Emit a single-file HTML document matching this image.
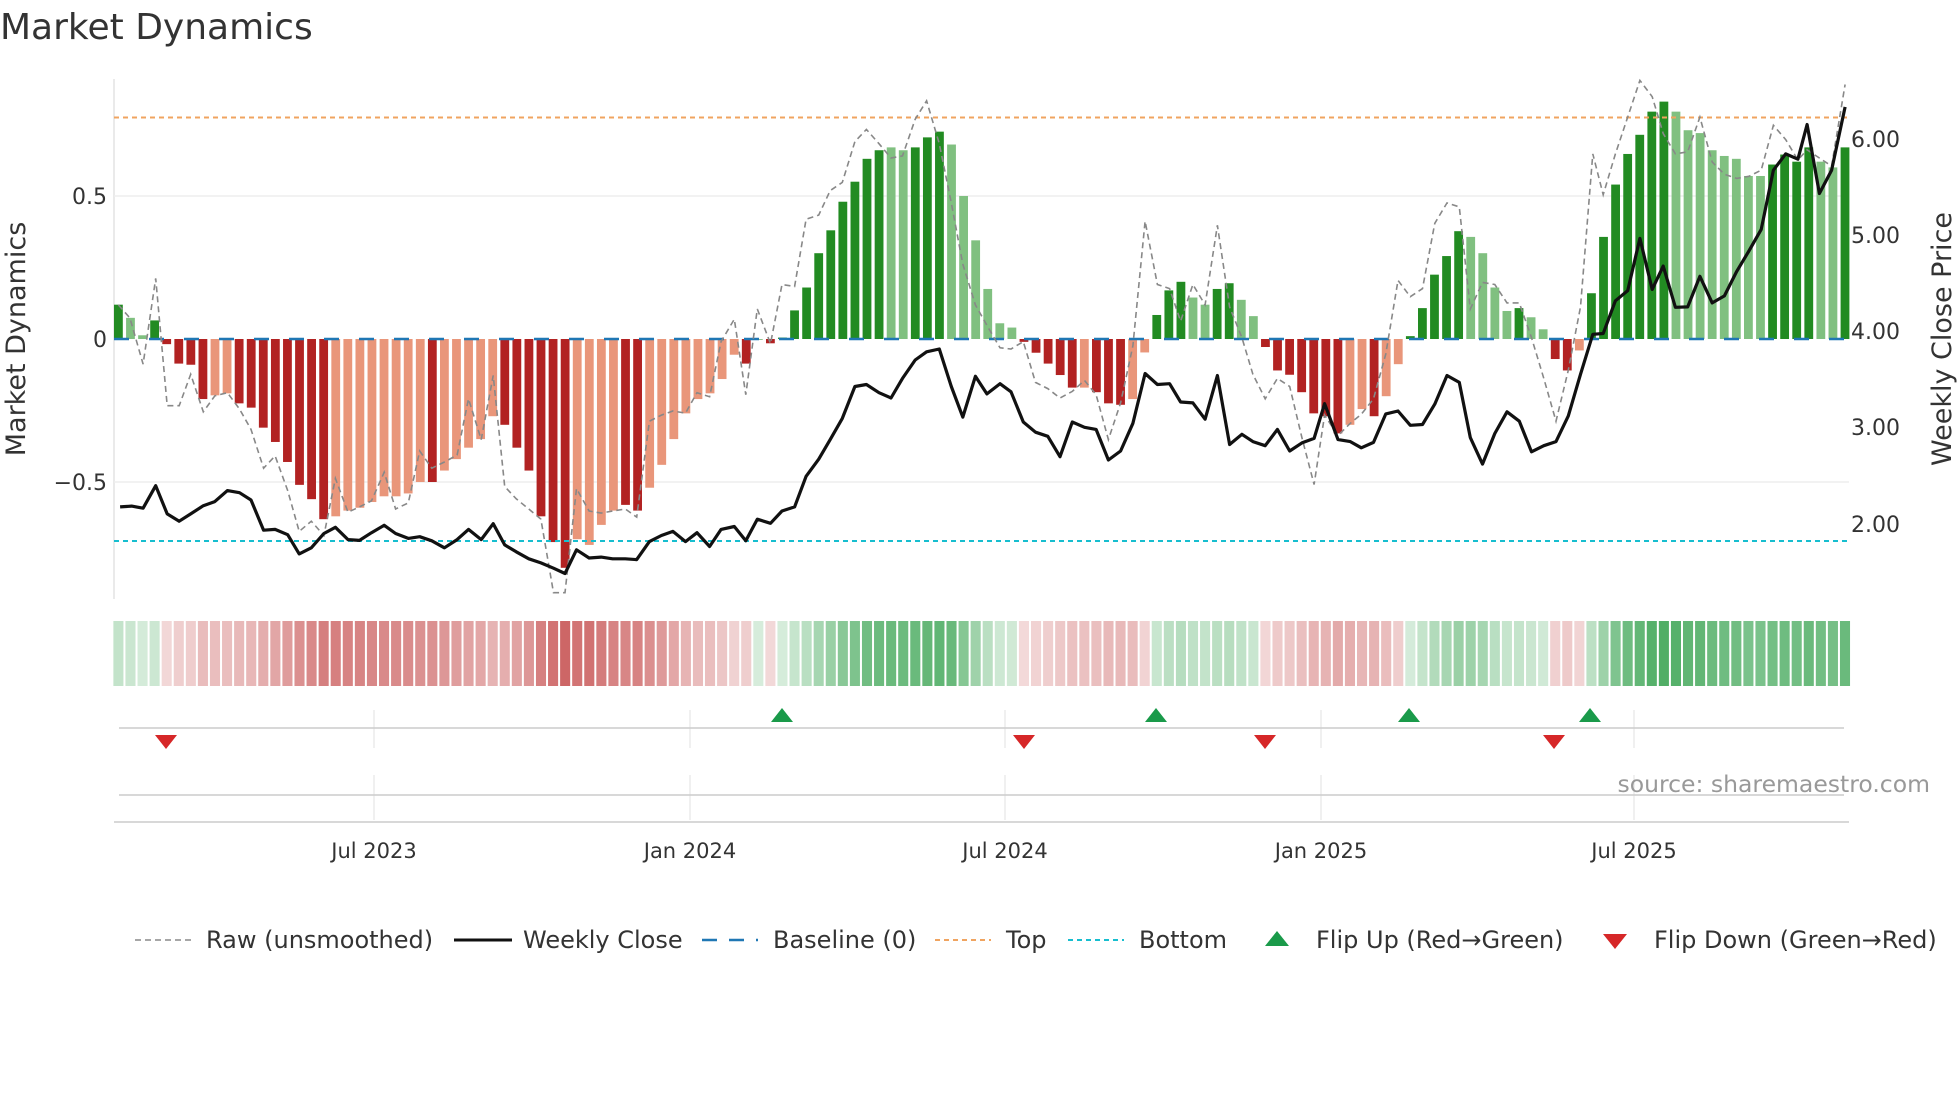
<!DOCTYPE html>
<html><head><meta charset="utf-8"><style>
html,body{margin:0;padding:0;background:#fff;}
svg{display:block;font-family:"DejaVu Sans","Liberation Sans",sans-serif;}
</style></head><body>
<svg id="s" width="1960" height="1102" viewBox="0 0 1960 1102" xmlns="http://www.w3.org/2000/svg">
<rect width="1960" height="1102" fill="#fff"/>
<text x="0" y="39" font-size="36" fill="#333">Market Dynamics</text>
<line x1="114" y1="79" x2="114" y2="599" stroke="#ddd" stroke-width="1.2"/>
<line x1="114" y1="196" x2="1849" y2="196" stroke="#eee" stroke-width="1.5"/>
<line x1="114" y1="482" x2="1849" y2="482" stroke="#eee" stroke-width="1.5"/>
<g id="bars"></g>
<g id="heat"></g>
<line x1="114" y1="339" x2="1849" y2="339" stroke="#1f77b4" stroke-width="2.5" stroke-dasharray="15,20"/>
<line x1="114" y1="117.5" x2="1849" y2="117.5" stroke="#f0a460" stroke-width="2" stroke-dasharray="5,4"/>
<line x1="114" y1="541" x2="1849" y2="541" stroke="#17becf" stroke-width="2" stroke-dasharray="5,4"/>
<polyline id="raw" fill="none" stroke="#888" stroke-width="1.6" stroke-dasharray="6,4"/>
<polyline id="close" fill="none" stroke="#111" stroke-width="3.2" stroke-linejoin="round"/>
<g font-size="22" fill="#333" text-anchor="end">
<text x="107" y="204">0.5</text><text x="107" y="347">0</text><text x="107" y="490">−0.5</text>
</g>
<g font-size="22" fill="#333">
<text x="1851" y="147">6.00</text><text x="1851" y="243">5.00</text><text x="1851" y="339">4.00</text><text x="1851" y="435">3.00</text><text x="1851" y="532">2.00</text>
</g>
<text transform="translate(25,339) rotate(-90)" font-size="27" fill="#333" text-anchor="middle">Market Dynamics</text>
<text transform="translate(1951,339) rotate(-90)" font-size="27" fill="#333" text-anchor="middle">Weekly Close Price</text>
<g stroke="#e6e6e6" stroke-width="1.2">
<line x1="374" y1="710" x2="374" y2="748"/><line x1="690" y1="710" x2="690" y2="748"/><line x1="1005" y1="710" x2="1005" y2="748"/><line x1="1321" y1="710" x2="1321" y2="748"/><line x1="1634" y1="710" x2="1634" y2="748"/>
<line x1="374" y1="775" x2="374" y2="820"/><line x1="690" y1="775" x2="690" y2="820"/><line x1="1005" y1="775" x2="1005" y2="820"/><line x1="1321" y1="775" x2="1321" y2="820"/><line x1="1634" y1="775" x2="1634" y2="820"/>
</g>
<line x1="119" y1="728" x2="1844" y2="728" stroke="#ccc" stroke-width="1.5"/>
<line x1="119" y1="795" x2="1844" y2="795" stroke="#ccc" stroke-width="1.5"/>
<line x1="114" y1="822" x2="1849" y2="822" stroke="#ccc" stroke-width="1.5"/>
<g fill="#1a9a4a">
<polygon points="771,722 793,722 782,708"/><polygon points="1145,722 1167,722 1156,708"/><polygon points="1398,722 1420,722 1409,708"/><polygon points="1579,722 1601,722 1590,708"/>
</g>
<g fill="#d62728">
<polygon points="155,735 177,735 166,749"/><polygon points="1013,735 1035,735 1024,749"/><polygon points="1254,735 1276,735 1265,749"/><polygon points="1543,735 1565,735 1554,749"/>
</g>
<text x="1930" y="792" font-size="23.5" fill="#999" text-anchor="end">source: sharemaestro.com</text>
<g font-size="21" fill="#333" text-anchor="middle">
<text x="374" y="858">Jul 2023</text><text x="690" y="858">Jan 2024</text><text x="1005" y="858">Jul 2024</text><text x="1321" y="858">Jan 2025</text><text x="1634" y="858">Jul 2025</text>
</g>
<g font-size="24" fill="#333">
<line x1="135" y1="940" x2="191" y2="940" stroke="#888" stroke-width="1.6" stroke-dasharray="6,4"/>
<text x="206" y="948">Raw (unsmoothed)</text>
<line x1="454" y1="940" x2="512" y2="940" stroke="#111" stroke-width="3"/>
<text x="523" y="948">Weekly Close</text>
<line x1="702" y1="940" x2="758" y2="940" stroke="#1f77b4" stroke-width="2.5" stroke-dasharray="15,12"/>
<text x="773" y="948">Baseline (0)</text>
<line x1="935" y1="940" x2="991" y2="940" stroke="#f0a460" stroke-width="2" stroke-dasharray="5,4"/>
<text x="1006" y="948">Top</text>
<line x1="1068" y1="940" x2="1124" y2="940" stroke="#17becf" stroke-width="2" stroke-dasharray="5,4"/>
<text x="1139" y="948">Bottom</text>
<polygon points="1265,946 1289,946 1277,931" fill="#1a9a4a"/>
<text x="1316" y="948">Flip Up (Red→Green)</text>
<polygon points="1603,934 1627,934 1615,949" fill="#d62728"/>
<text x="1654" y="948">Flip Down (Green→Red)</text>
</g>
</svg>
<script>
var V=[[.12,1],[.074,0],[.013,0],[.065,1],[-.018,1],[-.086,1],[-.09,1],[-.21,1],[-.197,0],[-.19,0],[-.225,1],[-.24,1],[-.31,1],[-.36,1],[-.43,1],[-.51,1],[-.56,1],[-.63,1],[-.62,0],[-.60,0],[-.59,0],[-.57,0],[-.55,0],[-.55,0],[-.54,0],[-.50,0],[-.50,1],[-.46,0],[-.42,0],[-.38,0],[-.35,0],[-.27,0],[-.30,1],[-.38,1],[-.46,1],[-.62,1],[-.71,1],[-.80,1],[-.70,0],[-.72,0],[-.65,0],[-.60,0],[-.58,1],[-.60,1],[-.52,0],[-.44,0],[-.35,0],[-.26,0],[-.21,0],[-.19,0],[-.14,0],[-.055,0],[-.086,1],[0,1],[-.015,1],[.005,1],[.10,1],[.18,1],[.30,1],[.38,1],[.48,1],[.55,1],[.63,1],[.66,1],[.67,0],[.66,0],[.67,1],[.705,1],[.725,1],[.68,0],[.50,0],[.345,0],[.175,0],[.055,0],[.04,0],[-.01,1],[-.048,1],[-.086,1],[-.126,1],[-.17,1],[-.17,0],[-.186,1],[-.225,1],[-.23,1],[-.21,0],[-.047,0],[.084,1],[.17,1],[.2,1],[.145,0],[.12,0],[.175,1],[.195,1],[.137,0],[.08,0],[-.028,1],[-.11,1],[-.125,1],[-.186,1],[-.26,1],[-.27,1],[-.33,1],[-.30,0],[-.245,0],[-.27,1],[-.2,0],[-.088,0],[.01,1],[.108,1],[.225,1],[.29,1],[.377,1],[.357,0],[.30,0],[.18,0],[.098,0],[.108,1],[.076,0],[.034,0],[-.07,1],[-.11,1],[-.04,0],[.16,1],[.357,1],[.54,1],[.647,1],[.714,1],[.795,1],[.83,1],[.795,0],[.73,0],[.72,0],[.66,0],[.64,0],[.63,0],[.57,0],[.57,0],[.61,1],[.645,1],[.62,1],[.67,1],[.62,0],[.60,0],[.67,1]];
var NS="http://www.w3.org/2000/svg",sp=(1845-118.4)/143;
var bars=document.getElementById('bars'),heat=document.getElementById('heat');
function R(g,x,y,w,h,f){var r=document.createElementNS(NS,'rect');r.setAttribute('x',x);r.setAttribute('y',y);r.setAttribute('width',w);r.setAttribute('height',h);r.setAttribute('fill',f);g.appendChild(r);}
V.forEach(function(d,i){var v=d[0],x=118.4+sp*i,h=Math.abs(v)*286;
var f=v>=0?(d[1]?'#228b22':'#80c080'):(d[1]?'#b22222':'#e9967a');
R(bars,x-4.4,v>=0?339-h:339,8.8,Math.max(h,0.5),f);
var a=0.2+0.65*Math.min(Math.abs(v)/0.83,1);
var c=v>=0?'rgba(50,160,75,'+a+')':'rgba(195,70,70,'+a+')';
R(heat,x-sp/2+1,621,sp-2,65,c);});
function pts(A,B){var o=[];A.forEach(function(p){o.push((100+p[0]/1.742).toFixed(1)+','+(60+p[1]/2.45).toFixed(1));});B.forEach(function(p){o.push((1000+p[0]/1.633).toFixed(1)+','+(60+p[1]/2.45).toFixed(1));});return o.join(' ');}
var C1=[[35,1095],[55,1093],[75,1098],[97,1043],[117,1112],[138,1130],[158,1112],[180,1092],[200,1082],[222,1055],[243,1060],[263,1078],[285,1152],[305,1150],[327,1163],[347,1210],[368,1195],[390,1160],[410,1145],[432,1175],[452,1177],[473,1158],[495,1140],[515,1160],[537,1172],[557,1168],[578,1178],[600,1195],[622,1175],[642,1150],[664,1175],[685,1136],[705,1188],[725,1205],[747,1222],[768,1232],[790,1245],[810,1258],[830,1200],[852,1220],[873,1218],[893,1222],[915,1222],[935,1224],[957,1180],[978,1165],[998,1155],[1020,1180],[1040,1158],[1062,1192],[1082,1150],[1105,1143],[1125,1178],[1145,1125],[1168,1135],[1188,1105],[1210,1095],[1230,1020],[1252,978],[1272,930],[1293,878],[1315,800],[1335,795],[1357,815],[1378,828],[1398,780],[1420,735],[1440,715],[1462,708],[1483,800],[1503,875],[1525,775],[1545,818]];
var C2=[[0,793],[18,813],[38,887],[58,912],[78,922],[98,972],[118,887],[138,900],[157,905],[177,980],[197,958],[217,890],[237,768],[257,795],[277,793],[295,838],[315,840],[335,880],[355,773],[375,942],[395,917],[413,935],[433,945],[453,905],[473,958],[493,938],[513,927],[530,842],[552,930],[572,935],[590,950],[610,937],[630,867],[650,860],[670,895],[690,893],[710,843],[730,773],[750,790],[768,925],[788,990],[808,915],[828,862],[848,885],[868,960],[888,945],[908,935],[928,872],[948,770],[968,672],[985,670],[1005,590],[1025,565],[1045,437],[1065,562],[1083,505],[1103,606],[1123,605],[1143,530],[1163,595],[1183,578],[1203,518],[1223,468],[1243,415],[1263,270],[1283,230],[1303,243],[1318,158],[1338,327],[1358,270],[1380,115]];
var G1=[[32,600],[52,632],[75,745],[97,535],[117,847],[138,847],[158,770],[180,862],[200,823],[222,815],[243,855],[263,905],[285,1000],[305,970],[327,1055],[347,1155],[368,1130],[390,1165],[410,1025],[432,1108],[452,1095],[473,1080],[495,1010],[515,1100],[537,1085],[557,958],[578,1000],[600,985],[622,968],[642,830],[664,930],[685,773],[705,1045],[725,1075],[747,1100],[768,1125],[790,1305],[810,1305],[830,1050],[852,1105],[873,1110],[893,1105],[915,1100],[935,1120],[957,885],[978,870],[998,860],[1020,865],[1040,815],[1062,825],[1082,690],[1105,635],[1125,820],[1145,610],[1168,695],[1188,550],[1210,555],[1230,390],[1252,380],[1272,320],[1293,300],[1315,200],[1335,170],[1357,205],[1378,240],[1398,235],[1420,145],[1440,100],[1462,205],[1483,350],[1503,500],[1525,600],[1545,650]];
var G2=[[0,705],[18,708],[38,690],[58,790],[78,805],[98,828],[118,812],[138,785],[157,820],[177,930],[197,840],[217,700],[237,395],[257,550],[277,560],[295,640],[315,550],[335,600],[355,405],[375,605],[395,680],[413,770],[433,830],[453,780],[473,800],[493,925],[513,1040],[530,870],[552,920],[572,890],[590,868],[610,830],[630,720],[650,540],[670,580],[690,560],[710,400],[730,350],[750,360],[768,610],[788,545],[808,550],[828,595],[848,595],[868,680],[888,780],[908,885],[928,760],[948,605],[968,230],[985,330],[1005,230],[1025,140],[1045,50],[1065,90],[1083,180],[1103,230],[1123,225],[1143,140],[1163,250],[1183,280],[1203,290],[1223,285],[1243,270],[1263,160],[1283,195],[1303,245],[1318,220],[1338,240],[1358,260],[1380,60]];
document.getElementById('close').setAttribute('points',pts(C1,C2));
document.getElementById('raw').setAttribute('points',pts(G1,G2));
</script>
</body></html>
